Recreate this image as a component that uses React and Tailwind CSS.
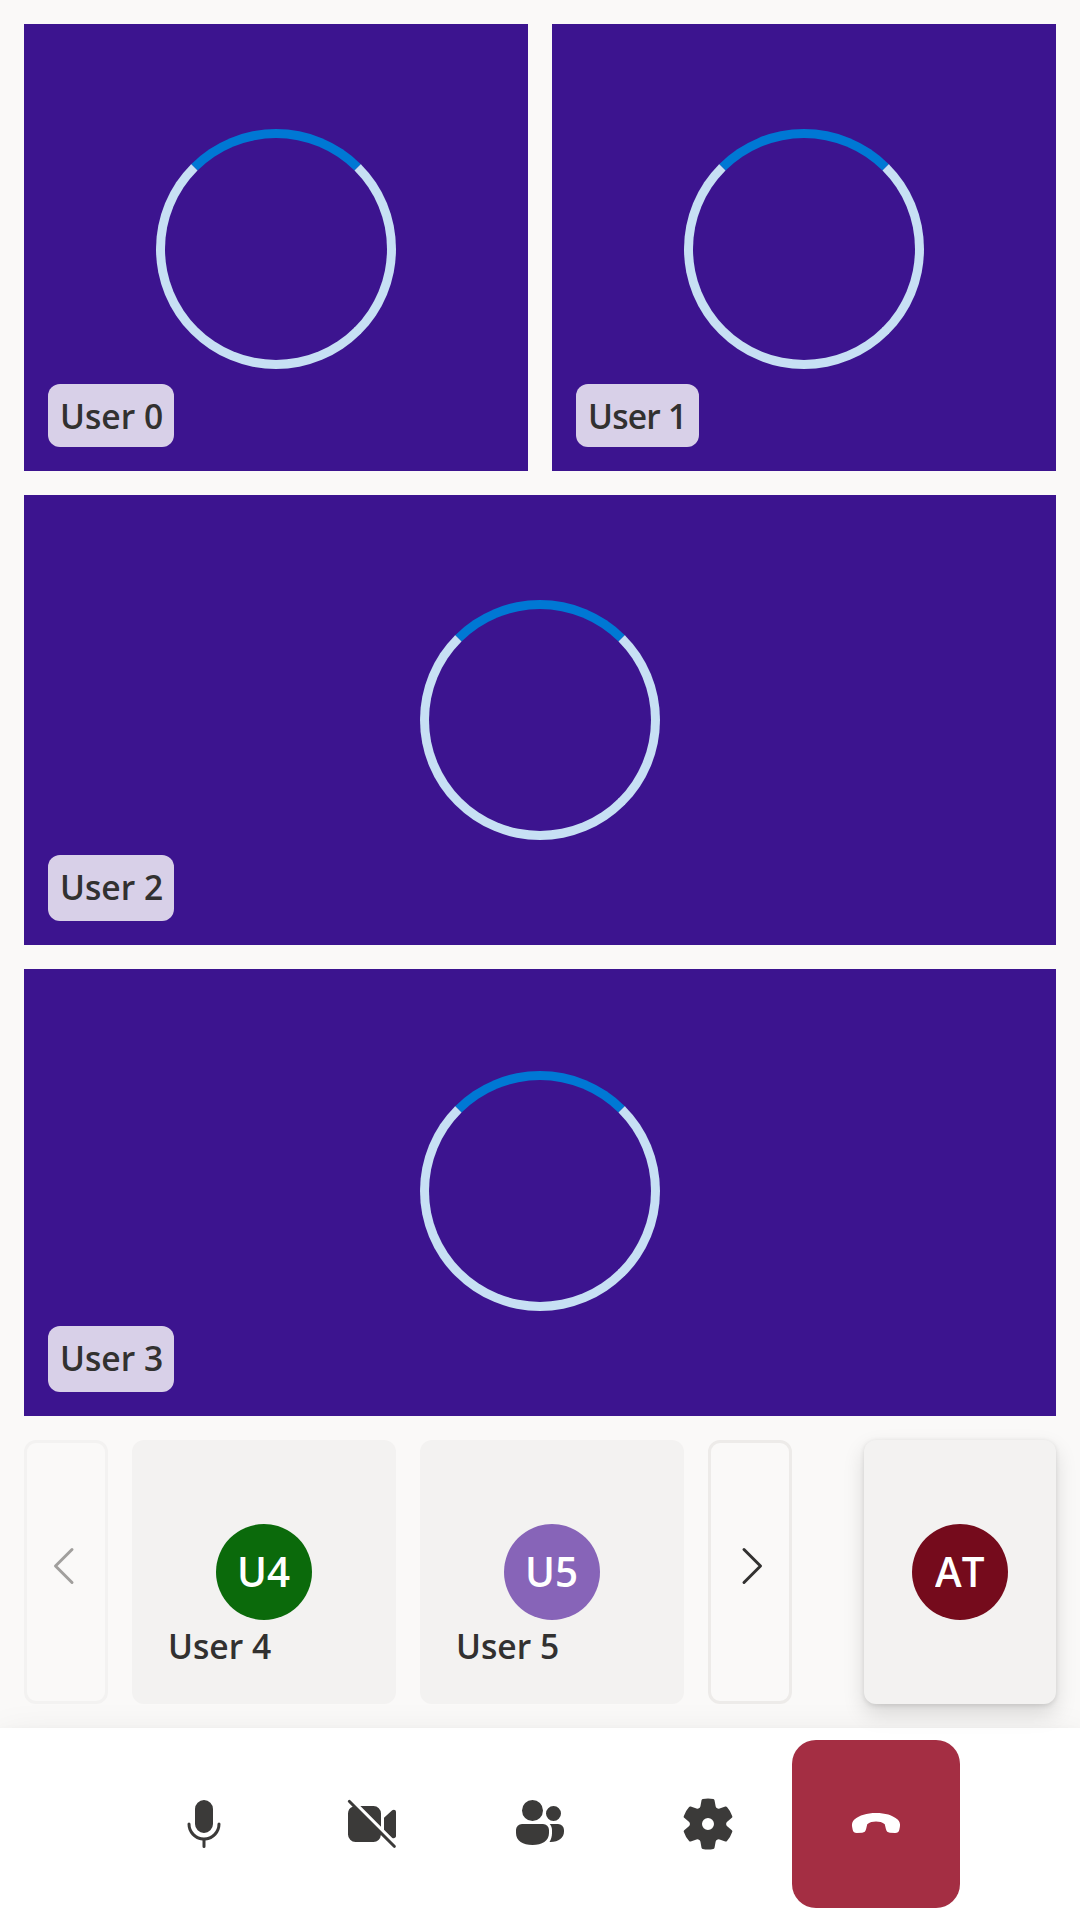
function Spinner({ className = "" }) {
  return (
    <div
      className={`size-60 rounded-full border-[9px] border-[#c7e0f4] border-t-[#0078d4] ${className}`}
    />
  );
}

function VideoTile({ name, className = "", labelClass, spinnerClass }) {
  return (
    <section className={`relative flex items-center justify-center bg-[#3c148f] ${className}`}>
      <Spinner className={spinnerClass} />
      <div
        className={`absolute bottom-6 left-6 flex items-center rounded-xl bg-[#d8d0e8] pl-3 ${labelClass}`}
      >
        <Name>{name}</Name>
      </div>
    </section>
  );
}

function Name({ children }) {
  return (
    <span className="origin-left scale-x-[0.96] text-[35px] leading-[48px] font-semibold whitespace-nowrap text-[#323130]">
      {children}
    </span>
  );
}

function Avatar({ initials, color }) {
  return (
    <div
      className={`flex size-24 items-center justify-center rounded-full pb-0.5 text-[42px] leading-none font-semibold text-white ${color}`}
    >
      <span className="scale-x-[0.96]">{initials}</span>
    </div>
  );
}

function AudioTile({ name, initials, color }) {
  return (
    <section className="relative flex size-66 items-center justify-center rounded-xl bg-[#f3f2f1]">
      <Avatar initials={initials} color={color} />
      <div className="absolute bottom-[34px] left-9 flex">
        <Name>{name}</Name>
      </div>
    </section>
  );
}

function PageButton({ label, className, d }) {
  return (
    <button aria-label={label} className={`flex h-66 w-21 items-center justify-center rounded-xl border-[3px] ${className}`}>
      <svg
        viewBox="0 0 84 264"
        className="h-66 w-21 shrink-0"
        fill="none"
        stroke="currentColor"
        strokeWidth="3"
        strokeLinecap="round"
        strokeLinejoin="round"
      >
        <path d={d} />
      </svg>
    </button>
  );
}

function ControlButton({ label, d, className = "text-[#3b3a39]" }) {
  return (
    <button aria-label={label} className={`flex size-42 items-center justify-center rounded-3xl ${className}`}>
      <svg viewBox="0 0 20 20" className="size-15" fill="currentColor">
        <path d={d} />
      </svg>
    </button>
  );
}

const icons = {
  mic: "M10 13a3 3 0 0 0 3-3V5a3 3 0 0 0-6 0v5a3 3 0 0 0 3 3ZM5.5 10a.5.5 0 0 0-1 0 5.5 5.5 0 0 0 5 5.48v2.02a.5.5 0 0 0 1 0v-2.02a5.5 5.5 0 0 0 5-5.48.5.5 0 0 0-1 0 4.5 4.5 0 1 1-9 0Z",
  videoOff:
    "M2.85 2.15a.5.5 0 1 0-.7.7l1.4 1.4A2.5 2.5 0 0 0 2 6.5v7A2.5 2.5 0 0 0 4.5 16h6a2.5 2.5 0 0 0 2.45-2.35l4.2 4.2a.5.5 0 0 0 .7-.7l-15-15ZM13 6.5v4.38L6.12 4h4.38A2.5 2.5 0 0 1 13 6.5Zm1 5.38 2.68 2.68c.52.4 1.32.1 1.32-.56V6c0-.75-.75-1-1.26-.58L14 7.9v3.98Z",
  people:
    "M11 5.5a3.5 3.5 0 1 1-7 0 3.5 3.5 0 0 1 7 0Zm6 1a2.5 2.5 0 1 1-5 0 2.5 2.5 0 0 1 5 0ZM4 10a2 2 0 0 0-2 2v1c0 2.6 2.3 4 5.5 4s5.5-1.4 5.5-4v-1a2 2 0 0 0-2-2H4Zm9.24 0c.47.53.76 1.23.76 2v1c0 1.13-.3 2.13-.83 2.98 2.93.12 4.83-1.28 4.83-3.48V12a2 2 0 0 0-2-2h-2.76Z",
  settings:
    "M1.91 7.38A8.5 8.5 0 0 1 3.7 4.3a.5.5 0 0 1 .54-.13l1.92.68a1 1 0 0 0 1.32-.76l.36-2a.5.5 0 0 1 .4-.4 8.53 8.53 0 0 1 3.55 0c.2.04.35.2.38.4l.37 2a1 1 0 0 0 1.32.76l1.92-.68a.5.5 0 0 1 .54.13 8.5 8.5 0 0 1 1.78 3.08c.06.2 0 .4-.15.54l-1.56 1.32a1 1 0 0 0 0 1.52l1.56 1.32a.5.5 0 0 1 .15.54 8.5 8.5 0 0 1-1.78 3.08.5.5 0 0 1-.54.13l-1.92-.68a1 1 0 0 0-1.32.76l-.37 2a.5.5 0 0 1-.38.4 8.53 8.53 0 0 1-3.56 0 .5.5 0 0 1-.39-.4l-.36-2a1 1 0 0 0-1.32-.76l-1.92.68a.5.5 0 0 1-.54-.13 8.5 8.5 0 0 1-1.78-3.08.5.5 0 0 1 .15-.54l1.56-1.32a1 1 0 0 0 0-1.52L2.06 7.92a.5.5 0 0 1-.15-.54ZM8 10a2 2 0 1 0 4 0 2 2 0 0 0-4 0Z",
  endCall:
    "m17.97 10.9-.2 1c-.15.75-.6 1.1-1.35 1.1l-1.8-.08c-.75-.05-1.15-.45-1.32-1.22l-.38-1.6C12.2 9.4 11 9.2 10 9.2s-2.2.2-2.92.9l-.38 1.6c-.17.77-.57 1.17-1.32 1.22L3.58 13c-.75 0-1.2-.35-1.35-1.1l-.2-1c-.17-.9.1-1.8.77-2.4C4.5 7.02 6.91 6.3 10 6.3s5.5.7 7.2 2.2c.67.6.94 1.5.77 2.4Z",
};

export default function App() {
  return (
    <div className="flex h-[1920px] w-[1080px] flex-col overflow-hidden bg-[#faf9f8] font-['Open_Sans','Noto_Sans',sans-serif]">
      <main className="flex h-[1728px] flex-col gap-6 p-6">
        <div className="flex h-[1392px] flex-col gap-6">
          <div className="flex h-[447px] gap-6">
            <VideoTile name="User 0" className="flex-1" labelClass="h-[63px] w-[126px]" spinnerClass="relative top-[1.5px]" />
            <VideoTile
              name="User 1"
              className="flex-1"
              labelClass="h-[63px] w-[123px] tracking-[-0.8px]"
              spinnerClass="relative top-[1.5px]"
            />
          </div>
          <VideoTile name="User 2" className="h-[450px]" labelClass="h-[66px] w-[126px] pb-[3px]" />
          <VideoTile
            name="User 3"
            className="h-[447px]"
            labelClass="h-[66px] w-[126px] pb-[3px]"
            spinnerClass="relative -top-[1.5px]"
          />
        </div>
        <div className="flex h-66 items-center justify-between">
          <div className="flex gap-6">
            <PageButton label="Previous" className="border-[#f3f2f1] text-[#a19f9d]" d="M48 109.5 31.5 126 48 142.5" />
            <AudioTile name="User 4" initials="U4" color="bg-[#0b6a0b]" />
            <AudioTile name="User 5" initials="U5" color="bg-[#8764b8]" />
            <PageButton label="Next" className="border-[#edebe9] text-[#323130]" d="M36 109.5 52.5 126 36 142.5" />
          </div>
          <section className="relative z-10 flex h-66 w-48 items-center justify-center rounded-xl bg-[#f3f2f1] shadow-[0_9.6px_21.6px_rgba(0,0,0,0.132),0_1.8px_5.4px_rgba(0,0,0,0.108)]">
            <Avatar initials="AT" color="bg-[#750b1c]" />
          </section>
        </div>
      </main>
      <footer className="flex h-48 items-center justify-center bg-white shadow-[0_19.2px_43.2px_rgba(0,0,0,0.14),0_3.6px_10.8px_rgba(0,0,0,0.04)]">
        <ControlButton label="Microphone" d={icons.mic} />
        <ControlButton label="Camera" d={icons.videoOff} />
        <ControlButton label="People" d={icons.people} />
        <ControlButton label="Settings" d={icons.settings} />
        <ControlButton label="Leave" d={icons.endCall} className="bg-[#a42e43] text-white" />
      </footer>
    </div>
  );
}
